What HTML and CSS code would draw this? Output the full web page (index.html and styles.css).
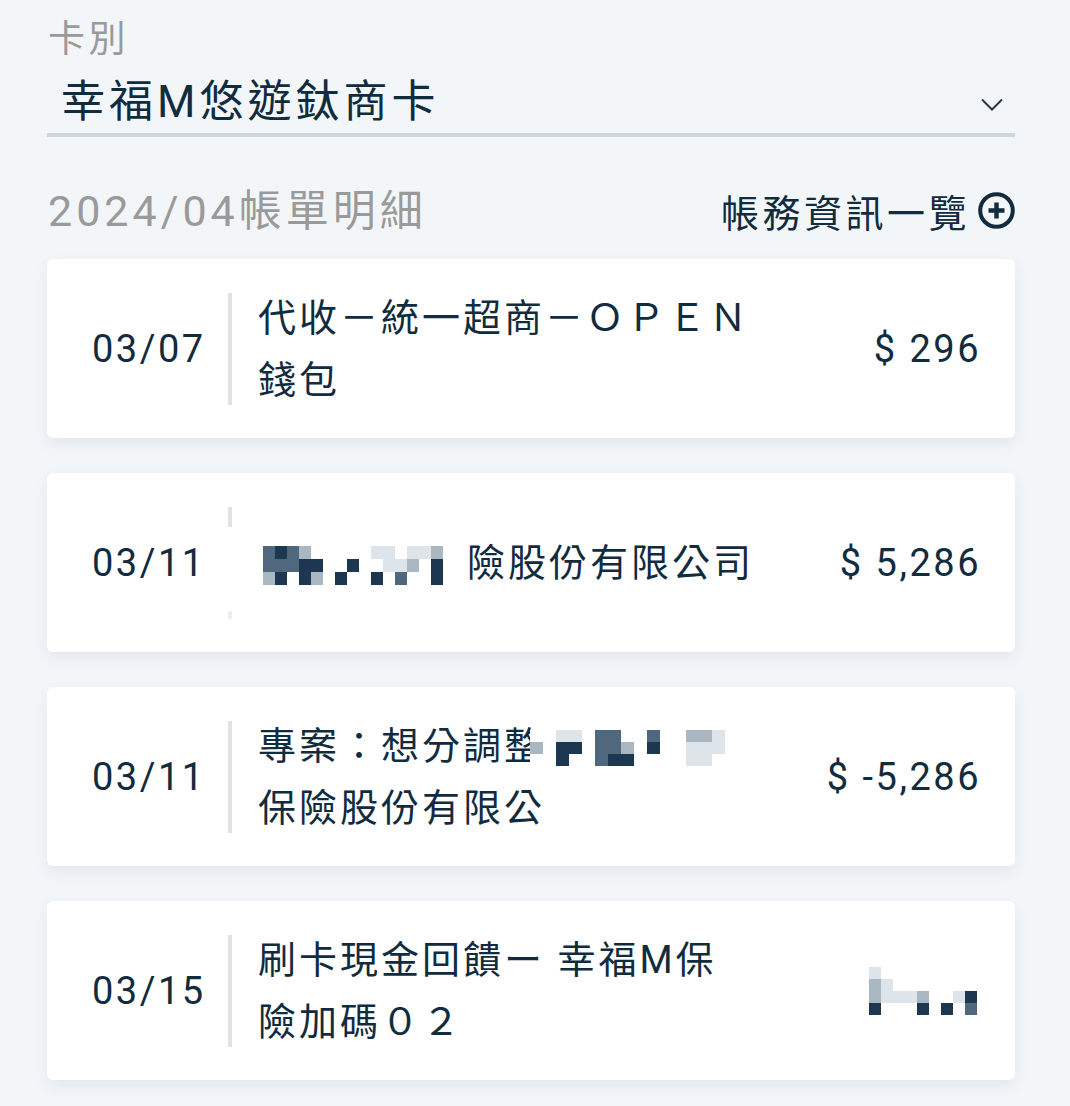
FILE: index.html
```html
<!DOCTYPE html>
<html lang="zh-Hant">
<head>
    <meta charset="UTF-8">
    <meta name="viewport" content="width=device-width, initial-scale=1.0">
    <title>帳單明細</title>
    <link rel="stylesheet" href="styles.css">
</head>
<body>

<div class="page">
    <div class="field">
        <div class="field-label">卡別</div>
        <div class="select">
            <span class="select-value">幸福M悠遊鈦商卡</span>
            <svg class="chevron" width="22" height="13" viewBox="0 0 22 13"><path d="M1 1.5l10 10 10-10" fill="none" stroke="#24384a" stroke-width="2"/></svg>
        </div>
    </div>

    <div class="bill-head">
        <h2 class="bill-title">2024/04帳單明細</h2>
        <a class="bill-link" href="#">帳務資訊一覽
            <svg class="plus" width="37" height="37" viewBox="0 0 37 37">
                <circle cx="18.5" cy="18.5" r="16.3" fill="none" stroke="#112b3f" stroke-width="4"/>
                <path d="M18.5 10.5v16M10.5 18.5h16" stroke="#112b3f" stroke-width="4.4"/>
            </svg>
        </a>
    </div>

    <ul class="txn-list">
        <li class="txn">
            <div class="txn-date">03/07</div>
            <span class="txn-sep"></span>
            <div class="txn-desc">代收－統一超商－ＯＰＥＮ<br>錢包</div>
            <div class="txn-amount">$ 296</div>
        </li>
        <li class="txn">
            <div class="txn-date">03/11</div>
            <span class="txn-sep veiled"></span>
            <div class="txn-desc"><span class="mz mz-wide"><i class="m"></i><i class="d"></i><i class="m"></i><i class="l"></i><i></i><i></i><i></i><i></i><i></i><i class="x"></i><i class="x"></i><i></i><i class="x"></i><i class="x"></i><i class="l"></i><i class="m"></i><i class="m"></i><i class="m"></i><i class="d"></i><i class="d"></i><i></i><i></i><i class="d"></i><i></i><i></i><i class="x"></i><i class="x"></i><i class="l"></i><i></i><i class="d"></i><i class="l"></i><i class="d"></i><i></i><i class="d"></i><i class="l"></i><i></i><i class="d"></i><i></i><i></i><i class="d"></i><i></i><i class="m"></i><i></i><i></i><i class="d"></i></span>險股份有限公司</div>
            <div class="txn-amount">$ 5,286</div>
        </li>
        <li class="txn">
            <div class="txn-date">03/11</div>
            <span class="txn-sep"></span>
            <div class="txn-desc">專案：想分調整<span class="mz mz-mid"><i></i><i></i><i class="x"></i><i class="x"></i><i></i><i class="m"></i><i class="m"></i><i></i><i></i><i class="m"></i><i></i><i></i><i class="l"></i><i class="l"></i><i class="x"></i><i class="l"></i><i></i><i class="d"></i><i class="d"></i><i></i><i class="m"></i><i class="m"></i><i class="l"></i><i></i><i class="d"></i><i></i><i></i><i class="x"></i><i class="x"></i><i class="x"></i><i></i><i></i><i class="d"></i><i></i><i></i><i class="m"></i><i class="d"></i><i class="d"></i><i></i><i></i><i></i><i></i><i class="x"></i><i class="x"></i><i></i></span><br>保險股份有限公</div>
            <div class="txn-amount">$ -5,286</div>
        </li>
        <li class="txn">
            <div class="txn-date">03/15</div>
            <span class="txn-sep"></span>
            <div class="txn-desc">刷卡現金回饋ー 幸福M保<br>險加碼０２</div>
            <div class="txn-amount"><span class="mz mz-small"><i class="x"></i><i></i><i></i><i></i><i></i><i></i><i></i><i></i><i></i><i class="l"></i><i class="x"></i><i></i><i></i><i></i><i></i><i></i><i></i><i></i><i class="l"></i><i class="x"></i><i class="x"></i><i class="x"></i><i class="l"></i><i></i><i></i><i class="x"></i><i class="d"></i><i class="d"></i><i></i><i></i><i></i><i class="d"></i><i></i><i class="d"></i><i></i><i class="m"></i></span></div>
        </li>
    </ul>
</div>

</body>
</html>
```

FILE: styles.css
```css
body {
    margin: 0;
    background-color: #f3f6f9;
    font-family: Roboto, "Noto Sans CJK TC", sans-serif;
    color: #112b3f;
}
.page {
    padding: 18px 55px 40px 47px;
}
.field-label {
    font-size: 37px;
    line-height: 44px;
    color: #9a9a9a;
    letter-spacing: 3.5px;
    padding-left: 1px;
}
.select {
    display: flex;
    align-items: center;
    justify-content: space-between;
    padding: 14px 12px 5px 14px;
    border-bottom: 4px solid #d1d6dc;
}
.select-value {
    font-size: 44px;
    line-height: 52px;
    letter-spacing: 4px;
}
.chevron {
    margin-top: 4px;
}
.bill-head {
    display: flex;
    align-items: center;
    justify-content: space-between;
    padding: 46px 0 21px;
}
.bill-title {
    margin: 0;
    font-size: 43px;
    font-weight: 400;
    line-height: 52px;
    color: #9a9a9a;
    letter-spacing: 4px;
    padding-left: 1px;
}
.bill-link {
    display: flex;
    align-items: center;
    gap: 8px;
    color: #112b3f;
    text-decoration: none;
    font-size: 38px;
    letter-spacing: 3.5px;
}
.txn-list {
    list-style: none;
    margin: 0;
    padding: 0;
    display: flex;
    flex-direction: column;
    gap: 35px;
}
.txn {
    display: flex;
    align-items: center;
    height: 179px;
    background: #fff;
    border-radius: 6px;
    box-shadow: 0 6px 14px rgba(40, 60, 80, 0.08);
    padding: 0 34px 0 45px;
}
.txn-date {
    width: 136px;
    flex: none;
    font-size: 38px;
    letter-spacing: 2.5px;
}
.txn-sep {
    width: 4px;
    height: 112px;
    flex: none;
    background: #dfe3e8;
}
.txn-sep.veiled {
    background: linear-gradient(#dfe3e8 0 20px, #fff 20px 104px, #eceff2 104px);
}
.txn-desc {
    width: 500px;
    margin-left: 26px;
    font-size: 38px;
    line-height: 62px;
    letter-spacing: 3px;
}
.txn-amount {
    margin-left: auto;
    font-size: 38px;
    letter-spacing: 2.5px;
}

/* pixelated (redacted) areas */
.mz {
    display: inline-grid;
    vertical-align: middle;
    background: #fff;
}
.mz i {
    background: #fff;
}
.mz i.d { background: #1d3750; }
.mz i.m { background: #4f687d; }
.mz i.l { background: #a9b7c2; }
.mz i.x { background: #dde5eb; }
.mz-wide {
    grid-template-columns: repeat(15, 12px);
    grid-auto-rows: 13px;
    margin: 0 24px 0 5px;
}
.mz-mid {
    grid-template-columns: repeat(15, 13px);
    grid-auto-rows: 12px;
    margin-left: -15px;
}
.mz-small {
    grid-template-columns: repeat(9, 12px);
    grid-auto-rows: 12px;
    margin-right: 4px;
}
```
